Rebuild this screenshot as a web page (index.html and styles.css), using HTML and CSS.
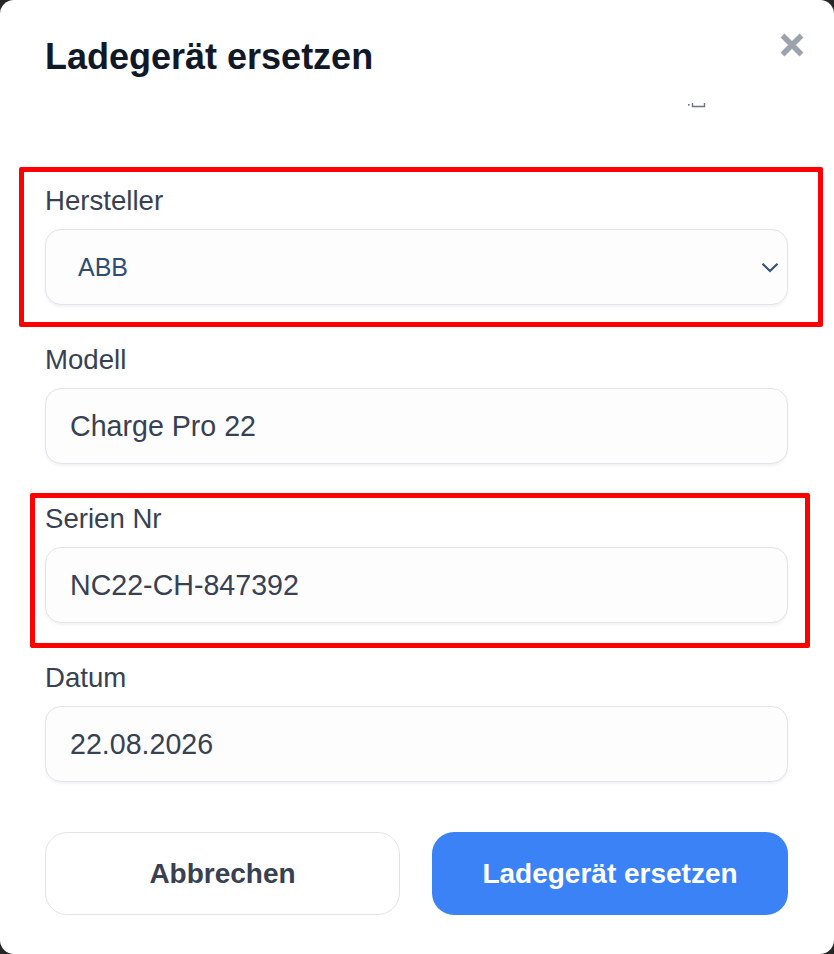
FILE: index.html
```html
<!DOCTYPE html>
<html lang="de">
<head>
<meta charset="utf-8">
<title>Ladegerät ersetzen</title>
<link rel="stylesheet" href="styles.css">
</head>
<body>
<div class="modal">
  <div class="header">
    <h1 class="title">Ladegerät ersetzen</h1>
    <button class="close" aria-label="Schliessen">
      <svg width="26" height="26" viewBox="0 0 26 26"><path d="M3.5 3.5 L22.5 22.5 M22.5 3.5 L3.5 22.5" stroke="#9ca3af" stroke-width="5.5" fill="none"/></svg>
    </button>
    <svg class="artifact" width="20" height="8" viewBox="0 0 20 8"><rect x="0" y="2" width="1.6" height="1.6" fill="#6b7280"/><path d="M4.5 1 V4.5 H16.5 V1" stroke="#6b7280" stroke-width="1.4" fill="none"/></svg>
  </div>

  <div class="form">
    <div class="field">
      <div class="mark mark-one"></div>
      <label class="label">Hersteller</label>
      <div class="control select">
        <span class="select-value">ABB</span>
        <svg class="chevron" width="18" height="11" viewBox="0 0 18 11"><path d="M1.5 1.8 L9 9 L16.5 1.8" stroke="#34537a" stroke-width="2.2" fill="none"/></svg>
      </div>
    </div>

    <div class="field">
      <label class="label">Modell</label>
      <input class="control input" type="text" value="Charge Pro 22">
    </div>

    <div class="field">
      <div class="mark mark-two"></div>
      <label class="label">Serien Nr</label>
      <input class="control input" type="text" value="NC22-CH-847392">
    </div>

    <div class="field">
      <label class="label">Datum</label>
      <input class="control input" type="text" value="22.08.2026">
    </div>
  </div>

  <div class="actions">
    <button class="btn btn-secondary">Abbrechen</button>
    <button class="btn btn-primary">Ladegerät ersetzen</button>
  </div>
</div>
</body>
</html>
```

FILE: styles.css
```css
* { box-sizing: border-box; }

html, body {
  margin: 0;
  padding: 0;
  background: #262626;
}

body {
  font-family: "Liberation Sans", Arial, Helvetica, sans-serif;
  width: 834px;
  height: 954px;
  overflow: hidden;
}

.modal {
  width: 834px;
  height: 954px;
  background: #ffffff;
  border-radius: 14px;
  padding: 35px 46px 0 45px;
}

.header {
  position: relative;
  display: flex;
  justify-content: space-between;
  align-items: flex-start;
  height: 150px;
}

.title {
  margin: 0;
  font-size: 36px;
  line-height: 43px;
  font-weight: 700;
  color: #111827;
}

.close {
  border: 0;
  background: none;
  padding: 0;
  margin: -3px -17px 0 0;
  width: 26px;
  height: 26px;
  cursor: pointer;
}

.close svg { display: block; }

.artifact {
  position: absolute;
  left: 643px;
  top: 67px;
}

.form {
  display: flex;
  flex-direction: column;
  gap: 39px;
}

.field {
  position: relative;
  display: flex;
  flex-direction: column;
}

.label {
  display: block;
  font-size: 27.6px;
  line-height: 32px;
  color: #374151;
  margin-bottom: 12px;
}

.control {
  width: 100%;
  height: 76px;
  border: 1.5px solid #e3e4ea;
  border-radius: 16px;
  background: #fdfdfe;
  box-shadow: 0 2px 3px rgba(17, 24, 39, 0.05);
  font-family: "Liberation Sans", Arial, Helvetica, sans-serif;
}

.input {
  padding: 0 0 0 24px;
  font-size: 28.6px;
  color: #374151;
  outline: none;
}

.select {
  display: flex;
  align-items: center;
  justify-content: space-between;
  padding: 0 8px 0 32px;
}

.select-value {
  font-size: 25px;
  color: #2e4d72;
}

.chevron { display: block; margin-top: 1px; }

.mark {
  position: absolute;
  border: 5px solid #ff0000;
  border-radius: 2px;
  pointer-events: none;
}

.mark-one {
  top: -18px;
  bottom: -22px;
  left: -26px;
  right: -35px;
}

.mark-two {
  top: -10px;
  bottom: -25px;
  left: -15px;
  right: -22px;
}

.actions {
  display: grid;
  grid-template-columns: 355px 356px;
  gap: 32px;
  margin-top: 50px;
}

.btn {
  height: 83px;
  border-radius: 22px;
  font-family: "Liberation Sans", Arial, Helvetica, sans-serif;
  font-size: 28px;
  font-weight: 700;
  cursor: pointer;
}

.btn-secondary {
  background: #ffffff;
  border: 1.5px solid #e3e4ea;
  color: #374151;
}

.btn-primary {
  background: #3b82f6;
  border: 0;
  color: #ffffff;
}
```
